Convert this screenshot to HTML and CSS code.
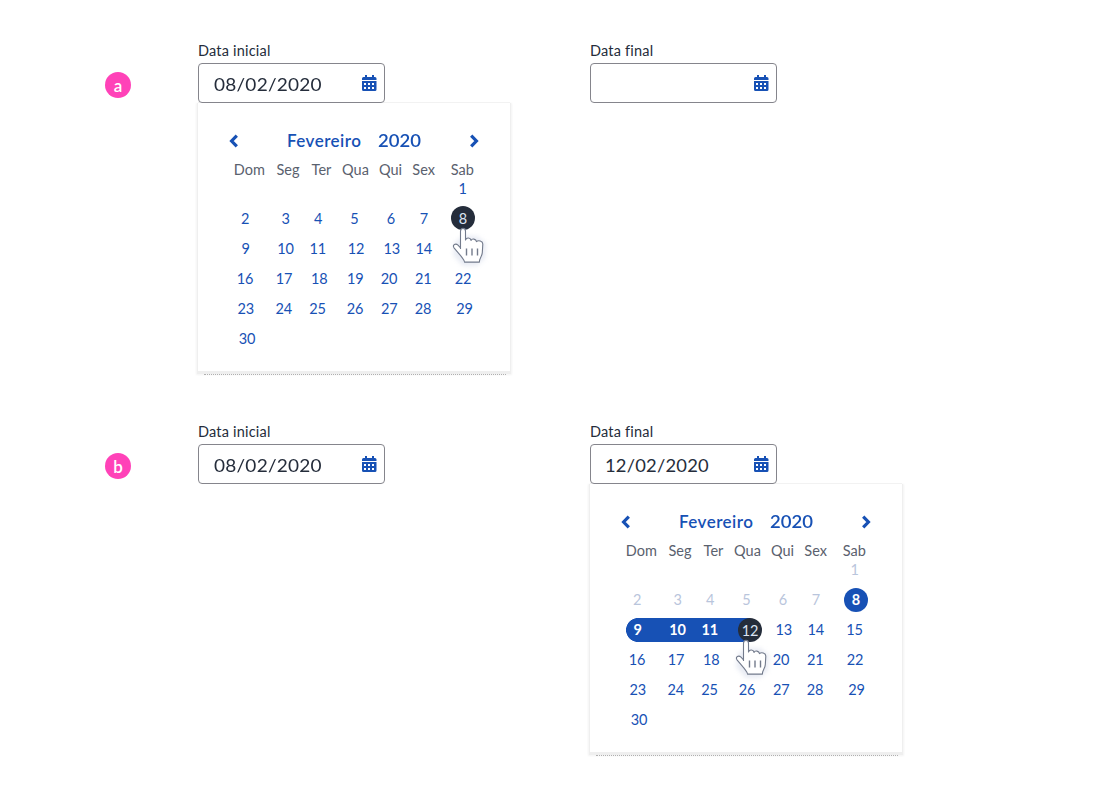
FILE: index.html
```html
<!DOCTYPE html>
<html lang="pt-BR">
<head>
<meta charset="utf-8">
<title>Data inicial e final</title>
<link rel="stylesheet" href="styles.css">
</head>
<body>
<svg class="defs" width="0" height="0" aria-hidden="true">
  <symbol id="cal" viewBox="0 0 15 16"><path fill="#1751b5" fill-rule="evenodd" d="M3 0h2v2h5V0h2v2h1Q14.500 2 14.500 3.500V5H0V3.500Q0 2 1.500 2H3zM0 6h14.500v8.500Q14.500 16 13 16H1.500Q0 16 0 14.500zM2 8v2h2V8zM6 8v2h2V8zM10 8v2h2V8zM2 12v2h2v-2zM6 12v2h2v-2zM10 12v2h2v-2z"/></symbol>
  <symbol id="chev" viewBox="0 0 10 14"><path d="M7.800 1.700 2.600 7l5.200 5.300" fill="none" stroke="#1751b5" stroke-width="3.200"/></symbol>
  <symbol id="hand" viewBox="0 0 44 46">
    <path class="halo" d="M8 18 16 12h14l9 7-1 15-8 8H16L6 31z"/>
    <path fill="#fff" stroke="#737b8c" stroke-width="1.100" stroke-linejoin="round" d="M13.500 25V7.200C13.500 3.400 18.500 3.400 18.500 7.200V16c.8-2.800 5-2.500 5.500.4 1-2.200 5-1.600 5.500 1.200 1.700-1.700 6.300-.6 6.300 2.500l-.5 8.500c-.2 4-2.900 5-2.900 9.500H17.500c0-2-1.800-3.600-3.500-6L7 23.800c-1.800-2.800 1.500-5 4-2.600l2.500 2.600"/>
    <path stroke="#737b8c" stroke-width="1.400" d="M19.500 24.500v7M25 24.500v7M30.500 24.500v7"/>
  </symbol>
</svg>
<main class="page">
  <section class="example">
    <div class="badge"><span>a</span></div>
    <div class="field">
      <label class="label">Data inicial</label>
      <div class="input"><span class="date">08/02/2020</span><svg class="cal-icon"><use href="#cal"/></svg></div>
      <div class="calendar">
        <div class="month"><svg class="chev"><use href="#chev"/></svg><span class="name">Fevereiro</span><span class="year">2020</span><svg class="chev next"><use href="#chev"/></svg></div>
        <div class="row week"><span>Dom</span><span>Seg</span><span>Ter</span><span>Qua</span><span>Qui</span><span>Sex</span><span>Sab</span></div>
        <div class="row r1"><span>1</span></div>
        <div class="row r2"><span>2</span><span>3</span><span>4</span><span>5</span><span>6</span><span>7</span><span class="current">8</span></div>
        <div class="row r3"><span>9</span><span>10</span><span>11</span><span>12</span><span>13</span><span>14</span><span class="covered">15</span></div>
        <div class="row r4"><span>16</span><span>17</span><span>18</span><span>19</span><span>20</span><span>21</span><span>22</span></div>
        <div class="row r5"><span>23</span><span>24</span><span>25</span><span>26</span><span>27</span><span>28</span><span>29</span></div>
        <div class="row r6"><span>30</span></div>
        <svg class="hand hand-a"><use href="#hand"/></svg>
      </div>
    </div>
    <div class="field">
      <label class="label">Data final</label>
      <div class="input"><span class="date"></span><svg class="cal-icon"><use href="#cal"/></svg></div>
    </div>
  </section>
  <section class="example">
    <div class="badge"><span>b</span></div>
    <div class="field">
      <label class="label">Data inicial</label>
      <div class="input"><span class="date">08/02/2020</span><svg class="cal-icon"><use href="#cal"/></svg></div>
    </div>
    <div class="field">
      <label class="label">Data final</label>
      <div class="input"><span class="date narrow">12/02/2020</span><svg class="cal-icon"><use href="#cal"/></svg></div>
      <div class="calendar">
        <div class="month"><svg class="chev"><use href="#chev"/></svg><span class="name">Fevereiro</span><span class="year">2020</span><svg class="chev next"><use href="#chev"/></svg></div>
        <div class="row week"><span>Dom</span><span>Seg</span><span>Ter</span><span>Qua</span><span>Qui</span><span>Sex</span><span>Sab</span></div>
        <div class="row r1 off"><span>1</span></div>
        <div class="row r2 off"><span>2</span><span>3</span><span>4</span><span>5</span><span>6</span><span>7</span><span class="start">8</span></div>
        <div class="row r3 range"><span class="in">9</span><span class="in">10</span><span class="in">11</span><span class="current end">12</span><span>13</span><span>14</span><span>15</span></div>
        <div class="row r4"><span>16</span><span>17</span><span>18</span><span class="covered">19</span><span>20</span><span>21</span><span>22</span></div>
        <div class="row r5"><span>23</span><span>24</span><span>25</span><span>26</span><span>27</span><span>28</span><span>29</span></div>
        <div class="row r6"><span>30</span></div>
        <svg class="hand hand-b"><use href="#hand"/></svg>
      </div>
    </div>
  </section>
</main>
</body>
</html>
```
FILE: styles.css
```css
* { box-sizing: border-box; }
body { margin: 0; background: #fff; font-family: Lato, "Open Sans", sans-serif; color: #252d3b; }
.defs { display: block; height: 0; }
.page { padding: 41px 0 0 105px; height: 792px; overflow: hidden; }
.example { display: grid; grid-template-columns: 93px 392px 392px; height: 381px; align-items: start; }
.badge { width: 26px; height: 26px; margin-top: 31px; border-radius: 50%; background: #ff42b8; color: #fff; font-size: 17px; line-height: 28px; text-align: center; font-weight: 600; }
.label { display: block; height: 22px; font-size: 14.500px; line-height: 19px; letter-spacing: 0.200px; }
.input { position: relative; z-index: 1; display: flex; width: 187px; height: 40px; border: 1px solid #85858c; border-radius: 4px; padding: 0 7px 0 15px; align-items: center; justify-content: space-between; background: #fff; }
.date { font-size: 17px; line-height: 24px; padding-top: 4px; letter-spacing: 0.200px; transform: scaleX(1.120); transform-origin: left; white-space: nowrap; }
.narrow { transform: translateX(-1px) scaleX(1.080); }
.cal-icon { display: block; width: 15px; height: 16px; }
.calendar { position: relative; width: 312px; height: 268px; padding-top: 25px; background: #fff; box-shadow: 0 -1px 0 0 #f2f2f2, 0 1px 0 1px #efefef, 0 2px 0 1px #efefef, 0 2px 2px 2px #f3f3f3; }
.calendar::after { content: ""; position: absolute; left: 6px; right: 4px; bottom: -4px; border-bottom: 1px dotted #b0b0b0; }
.month { display: grid; grid-template-columns: 58px 91px 91px 10px; padding-left: 31px; height: 26px; align-items: center; color: #1751b5; font-size: 17px; font-weight: 600; line-height: 24px; }
.name { letter-spacing: 0.450px; }
.year { transform: scaleX(1.090); transform-origin: left; }
.chev { display: block; width: 10px; height: 14px; }
.next { transform: scaleX(-1); }
.row { display: grid; height: 30px; color: #1751b5; font-size: 14.500px; line-height: 30px; text-align: center; }
.row span { position: relative; width: 32px; margin-left: -0.500px; letter-spacing: -0.200px; }
.row.week { height: 24px; margin-top: 3px; line-height: 25px; color: #5a616e; padding-left: 35.800px; grid-template-columns: 38.700px 33.500px 34px 35px 33.200px 38.600px 32px; }
.row.week span { letter-spacing: 0; }
.row.r1 { padding-left: 249px; margin-top: -7px; }
.row.r2 { padding-left: 31.700px; grid-template-columns: 40.300px 32.500px 36.300px 36.500px 33px 38.700px 32px; }
.row.r3 { padding-left: 32px; grid-template-columns: 40px 32.300px 38.200px 35.700px 32px 38.800px 32px; }
.row.r4 { padding-left: 31.500px; grid-template-columns: 39px 35.200px 36px 33.800px 34.200px 39.800px 32px; }
.row.r5 { padding-left: 32.200px; grid-template-columns: 38px 33.800px 37.500px 34.200px 33.800px 41.500px 32px; }
.row.r6 { padding-left: 33.500px; }
.row.off { color: #b9c5dc; }
.row .current, .row .start { width: 24px; height: 24px; margin: 2px 0 0 4px; border-radius: 50%; line-height: 26px; background: #252d3b; color: #dce4f2; }
.row .start { margin: 3px 0 0 5px; line-height: 24px; background: #1751b5; color: #fff; font-weight: 700; }
.row .end { margin: 3px 0 0 5.500px; line-height: 25px; }
.range { background: linear-gradient(#1751b5, #1751b5) 48px 3px / 112px 24px no-repeat, radial-gradient(circle at 48px 15px, #1751b5 11.600px, transparent 12.300px); }
.row .in { color: #fff; font-weight: 700; }
.row .covered { visibility: hidden; }
.hand { position: absolute; width: 44px; height: 46px; overflow: visible; }
.halo { fill: #e9ecf4; filter: blur(2px); }
.hand-a { left: 249px; top: 121px; }
.hand-b { left: 140px; top: 152px; }
```
